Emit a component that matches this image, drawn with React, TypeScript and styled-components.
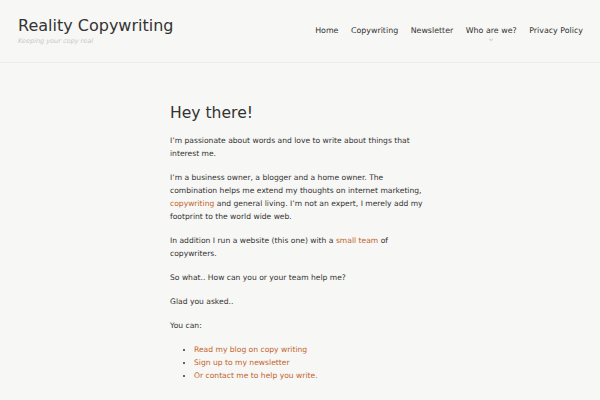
import React from "react";
import styled, { createGlobalStyle } from "styled-components";

const GlobalStyle = createGlobalStyle`
  html, body {
    margin: 0;
    padding: 0;
    background: #f7f7f5;
  }
  body {
    font-family: "DejaVu Sans", "Liberation Sans", sans-serif;
    color: #333;
  }
`;

const Header = styled.header`
  height: 62px;
  border-bottom: 1px solid #ededeb;
  display: flex;
  align-items: flex-start;
  justify-content: space-between;
  padding: 0 17px 0 18px;
`;

const Branding = styled.div`
  padding-top: 16px;
`;

const SiteTitle = styled.h1`
  margin: 0;
  font-size: 16px;
  font-weight: normal;
  line-height: 20px;
  color: #333;
`;

const Tagline = styled.p`
  margin: 1px 0 0;
  font-size: 6.5px;
  font-style: italic;
  color: #c8c8c8;
`;

const Nav = styled.nav`
  display: flex;
  gap: 12.5px;
  padding-top: 26px;
`;

const NavItem = styled.a`
  position: relative;
  font-size: 7.9px;
  line-height: 10px;
  color: #333;
  text-decoration: none;
`;

const Caret = styled.span`
  position: absolute;
  left: 50%;
  top: 11px;
  margin-left: -2px;
  width: 3px;
  height: 3px;
  border-right: 1px solid #c4c4c4;
  border-bottom: 1px solid #c4c4c4;
  transform: rotate(45deg) scale(0.7);
`;

const Main = styled.main`
  width: 262px;
  margin-left: 170px;
  padding-top: 40px;
`;

const Title = styled.h2`
  margin: 0 0 11px;
  font-size: 15.6px;
  font-weight: normal;
  line-height: 20px;
  color: #333;
`;

const Para = styled.p`
  margin: 0 0 11px;
  font-size: 7.6px;
  line-height: 13px;
`;

const Link = styled.a`
  color: #c2652b;
  text-decoration: none;
`;

const List = styled.ul`
  margin: 0;
  padding-left: 24px;
  font-size: 7.6px;
  line-height: 13px;
  li::marker {
    color: #333;
  }
`;

const navLinks = ["Home", "Copywriting", "Newsletter", "Who are we?", "Privacy Policy"];

export default function App() {
  return (
    <>
      <GlobalStyle />
      <Header>
        <Branding>
          <SiteTitle>Reality Copywriting</SiteTitle>
          <Tagline>Keeping your copy real</Tagline>
        </Branding>
        <Nav>
          {navLinks.map((label) => (
            <NavItem key={label} href="#">
              {label}
              {label === "Who are we?" && <Caret />}
            </NavItem>
          ))}
        </Nav>
      </Header>
      <Main>
        <Title>Hey there!</Title>
        <Para>I’m passionate about words and love to write about things that interest me.</Para>
        <Para>
          I’m a business owner, a blogger and a home owner. The combination helps me extend my
          thoughts on internet marketing, <Link href="#">copywriting</Link> and general living. I’m
          not an expert, I merely add my footprint to the world wide web.
        </Para>
        <Para>
          In addition I run a website (this one) with a <Link href="#">small team</Link> of
          copywriters.
        </Para>
        <Para>So what.. How can you or your team help me?</Para>
        <Para>Glad you asked..</Para>
        <Para>You can:</Para>
        <List>
          <li><Link href="#">Read my blog on copy writing</Link></li>
          <li><Link href="#">Sign up to my newsletter</Link></li>
          <li><Link href="#">Or contact me to help you write.</Link></li>
        </List>
      </Main>
    </>
  );
}
